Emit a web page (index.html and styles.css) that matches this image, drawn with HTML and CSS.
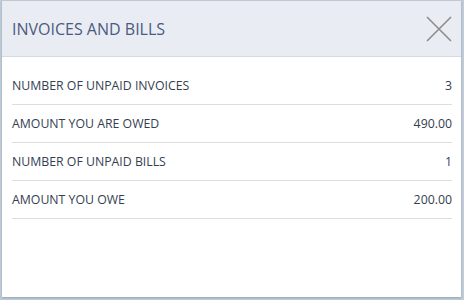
FILE: index.html
```html
<!DOCTYPE html>
<html lang="en">
<head>
    <meta charset="UTF-8">
    <meta name="viewport" content="width=device-width, initial-scale=1.0">
    <title>Invoices and Bills</title>
    <link rel="stylesheet" href="styles.css">
</head>
<body>

    <div class="panel">
        <div class="panel-header">
            <h2>INVOICES AND BILLS</h2>
            <button class="close-btn" aria-label="Close">
                <svg width="26" height="26" viewBox="0 0 26 26">
                    <path d="M1 1 L25 25 M25 1 L1 25" stroke="#8c8c8c" stroke-width="1.6" fill="none"/>
                </svg>
            </button>
        </div>

        <div class="summary">
            <div class="row">
                <span class="label">NUMBER OF UNPAID INVOICES</span>
                <span class="value">3</span>
            </div>
            <div class="row">
                <span class="label">AMOUNT YOU ARE OWED</span>
                <span class="value">490.00</span>
            </div>
            <div class="row">
                <span class="label">NUMBER OF UNPAID BILLS</span>
                <span class="value">1</span>
            </div>
            <div class="row">
                <span class="label">AMOUNT YOU OWE</span>
                <span class="value">200.00</span>
            </div>
        </div>
    </div>

</body>
</html>
```

FILE: styles.css
```css
html, body {
    margin: 0;
    height: 100%;
}

body {
    font-family: 'Open Sans', 'Liberation Sans', sans-serif;
    background-color: #c2ccd8;
    padding: 1px 3px 3px 2px;
    box-sizing: border-box;
}

.panel {
    height: 100%;
    background-color: white;
    box-shadow: 0 1px 2px rgba(60, 80, 110, 0.35);
}

.panel-header {
    height: 55px;
    display: flex;
    align-items: center;
    justify-content: space-between;
    padding: 0 9px 0 10px;
    background-color: #e9edf3;
    border-bottom: 1px solid #d3dae3;
}

h2 {
    margin: 0;
    font-size: 16px;
    font-weight: normal;
    color: #4b5a7e;
}

.close-btn {
    background: none;
    border: none;
    padding: 0;
    width: 26px;
    height: 26px;
    cursor: pointer;
}

.close-btn svg {
    display: block;
}

.summary {
    padding: 10px 9px 0 10px;
}

.row {
    height: 37px;
    display: flex;
    align-items: center;
    justify-content: space-between;
    border-bottom: 1px solid #dcdde4;
    font-size: 12.3px;
    color: #353e50;
}
```
